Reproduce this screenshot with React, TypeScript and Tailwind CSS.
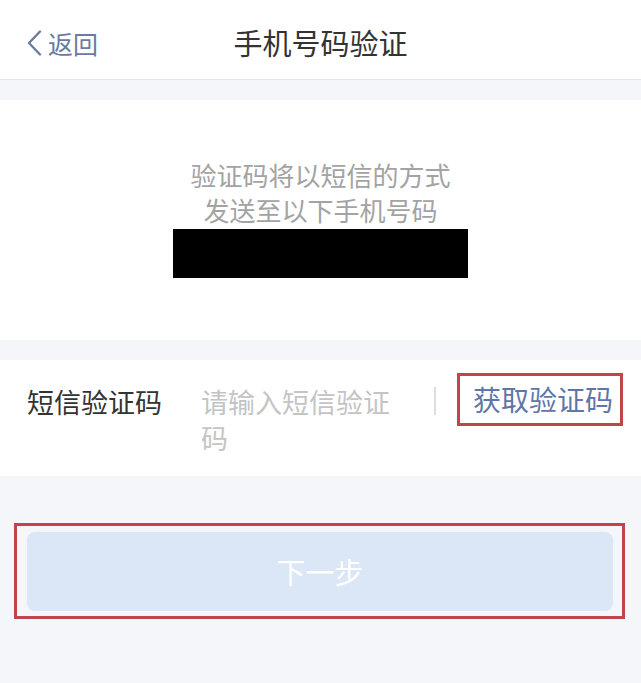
import React from 'react';

const font = { fontFamily: '"Noto Sans CJK SC", "Noto Sans", sans-serif' };

const App: React.FC = () => {
    return (
        <div className="min-h-screen bg-[#f5f6f9]" style={font}>
            {/* Header */}
            <div className="relative flex h-[80px] items-center justify-center border-b border-[#e4e5e8] bg-white pt-[4px]">
                <button className="absolute left-[27px] top-[29px] flex items-center text-[#6a7aa0]">
                    <svg width="15" height="26" viewBox="0 0 15 26" fill="none">
                        <path d="M13 1.5L2 13L13 24.5" stroke="#6a7aa0" strokeWidth="2.4" strokeLinecap="round" strokeLinejoin="round" />
                    </svg>
                    <span className="ml-[6px] text-[25px] leading-[28px]">返回</span>
                </button>
                <h1 className="text-[29px] leading-[36px] text-[#333333]">手机号码验证</h1>
            </div>

            {/* Info */}
            <div className="mt-[20px] flex flex-col items-center bg-white pt-[57px] pb-[62px]">
                <p className="text-center text-[26px] leading-[35px] text-[#a3a3a3]">
                    验证码将以短信的方式
                    <br />
                    发送至以下手机号码
                </p>
                <div className="mt-[2px] h-[49px] w-[295px] bg-black" />
            </div>

            {/* SMS code row */}
            <div className="mt-[20px] flex h-[116px] items-start bg-white pl-[27px]">
                <span className="mt-[24px] text-[27px] leading-[36px] text-[#333333]">短信验证码</span>
                <div className="mt-[24px] ml-[39px] w-[200px] text-[27px] leading-[36px] text-[#c4c4c4]">
                    请输入短信验证码
                </div>
                <div className="mt-[27px] ml-[33px] h-[28px] w-[2px] bg-[#dedede]" />
                <div className="mt-[13px] ml-[21px] border-[3px] border-[#c0454a] pl-[13px] pr-[7px] text-[28px] leading-[47px] text-[#5f76a6]">
                    获取验证码
                </div>
            </div>

            {/* Next button */}
            <div className="ml-[14px] mr-[16px] mt-[47px] border-[3px] border-[#c0454a] pt-[6px] pr-[9px] pb-[5px] pl-[10px]">
                <button className="flex h-[79px] w-full items-center justify-center rounded-[8px] bg-[#dbe6f6] text-[29px] text-white">
                    下一步
                </button>
            </div>
        </div>
    );
};

export default App;
